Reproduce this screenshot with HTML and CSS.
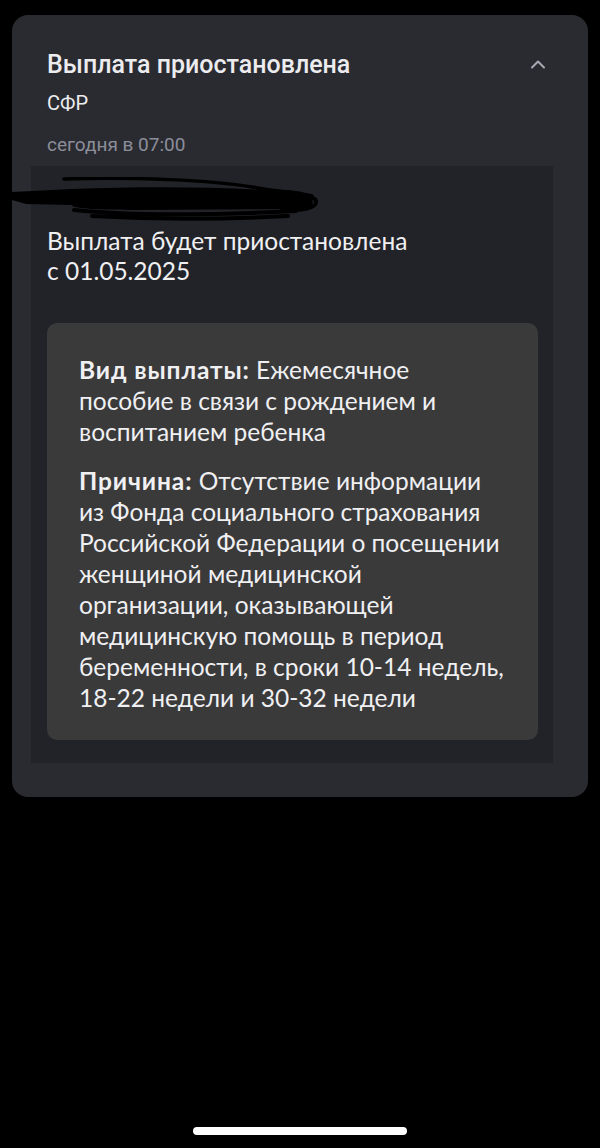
FILE: index.html
```html
<!DOCTYPE html>
<html lang="ru">
<head>
<meta charset="utf-8">
<link rel="stylesheet" href="styles.css">
</head>
<body>
<div class="screen">
  <div class="card">
    <div class="head">
      <div class="title">Выплата приостановлена</div>
      <svg class="chev" width="18" height="12" viewBox="0 0 18 12"><path d="M3 9.5 L9 3.5 L15 9.5" fill="none" stroke="#a8aab3" stroke-width="2" stroke-linecap="round" stroke-linejoin="round"/></svg>
    </div>
    <div class="sender">СФР</div>
    <div class="time">сегодня в 07:00</div>
    <div class="content">
      <div class="redacted">
        <span class="hidden-name">Фамилия Имя Отчество</span>
        <svg class="scribble" width="310" height="44" viewBox="0 0 310 44">
          <path d="M0 15 L60 12 C140 9 220 10 285 15 C304 18 306 30 290 32 L120 33 C80 33 58 31 60 28 L14 27 L0 23 Z" fill="#000"/>
          <path d="M52 2 C120 0 200 3 240 10 C262 14 282 16 300 19" fill="none" stroke="#000" stroke-width="3.5" stroke-linecap="round"/>
          <path d="M62 33 C120 39 200 38 284 34 M80 39 C150 43 220 42 276 39 M250 15 C280 13 302 18 304 24 C305 31 290 34 270 33" fill="none" stroke="#000" stroke-width="4" stroke-linecap="round"/>
        </svg>
      </div>
      <div class="message">Выплата будет приостановлена<br>с 01.05.2025</div>
      <div class="details">
        <p class="para"><b>Вид выплаты:</b> Ежемесячное пособие в связи с рождением и воспитанием ребенка</p>
        <p class="para"><b>Причина:</b> Отсутствие информации из Фонда социального страхования Российской Федерации о посещении женщиной медицинской организации, оказывающей медицинскую помощь в период беременности, в сроки 10-14 недель, 18-22 недели и 30-32 недели</p>
      </div>
    </div>
  </div>
  <div class="spacer"></div>
  <div class="home-bar"></div>
</div>
</body>
</html>
```
FILE: styles.css
```css
* { box-sizing: border-box; }
html, body { margin: 0; padding: 0; background: #000; }
.screen {
  width: 600px;
  height: 1148px;
  display: flex;
  flex-direction: column;
  padding: 15px 12px 0 12px;
}
.card {
  background: #2a2b31;
  border-radius: 16px;
  padding: 35px 35px 34px 19px;
}
.head {
  display: flex;
  align-items: center;
  justify-content: space-between;
  padding-left: 16px;
  height: 30px;
}
.title {
  font-family: Roboto, "Noto Sans", sans-serif;
  font-weight: 500;
  font-size: 25px;
  line-height: 30px;
  color: #ececef;
}
.chev { margin-right: 6px; margin-top: -2px; }
.sender {
  font-family: Roboto, "Noto Sans", sans-serif;
  font-size: 20px;
  color: #ececef;
  padding-left: 16px;
  margin-top: 11px;
  line-height: 24px;
}
.time {
  font-family: Roboto, "Noto Sans", sans-serif;
  font-size: 19px;
  color: #8c8e9a;
  padding-left: 16px;
  margin-top: 18px;
  line-height: 24px;
}
.content {
  background: #222329;
  margin-top: 9px;
  padding: 16px 15px 23px 16px;
}
.redacted {
  position: relative;
  height: 44px;
  font-family: Lato, sans-serif;
  font-size: 24.5px;
  color: #ececef;
}
.hidden-name {
  position: absolute;
  left: 0;
  top: 4px;
  color: #ececef;
  clip-path: inset(0 0 62% 0);
}
.scribble {
  position: absolute;
  left: -35px;
  top: -5px;
}
.message {
  font-family: Lato, sans-serif;
  font-size: 24.5px;
  line-height: 30px;
  color: #f0f0f2;
}
.details {
  margin-top: 37px;
  background: #3a3a3b;
  border-radius: 10px;
  padding: 31px 31px 27px 32px;
}
.para {
  margin: 0;
  font-family: Lato, sans-serif;
  font-size: 24.5px;
  line-height: 31px;
  color: #f0f0f2;
}
.para + .para { margin-top: 18px; }
.para b { font-weight: 700; letter-spacing: 0.9px; }
.spacer { flex: 1; }
.home-bar {
  align-self: center;
  width: 214px;
  height: 8px;
  border-radius: 4px;
  background: #fff;
  margin-bottom: 13px;
}
```
